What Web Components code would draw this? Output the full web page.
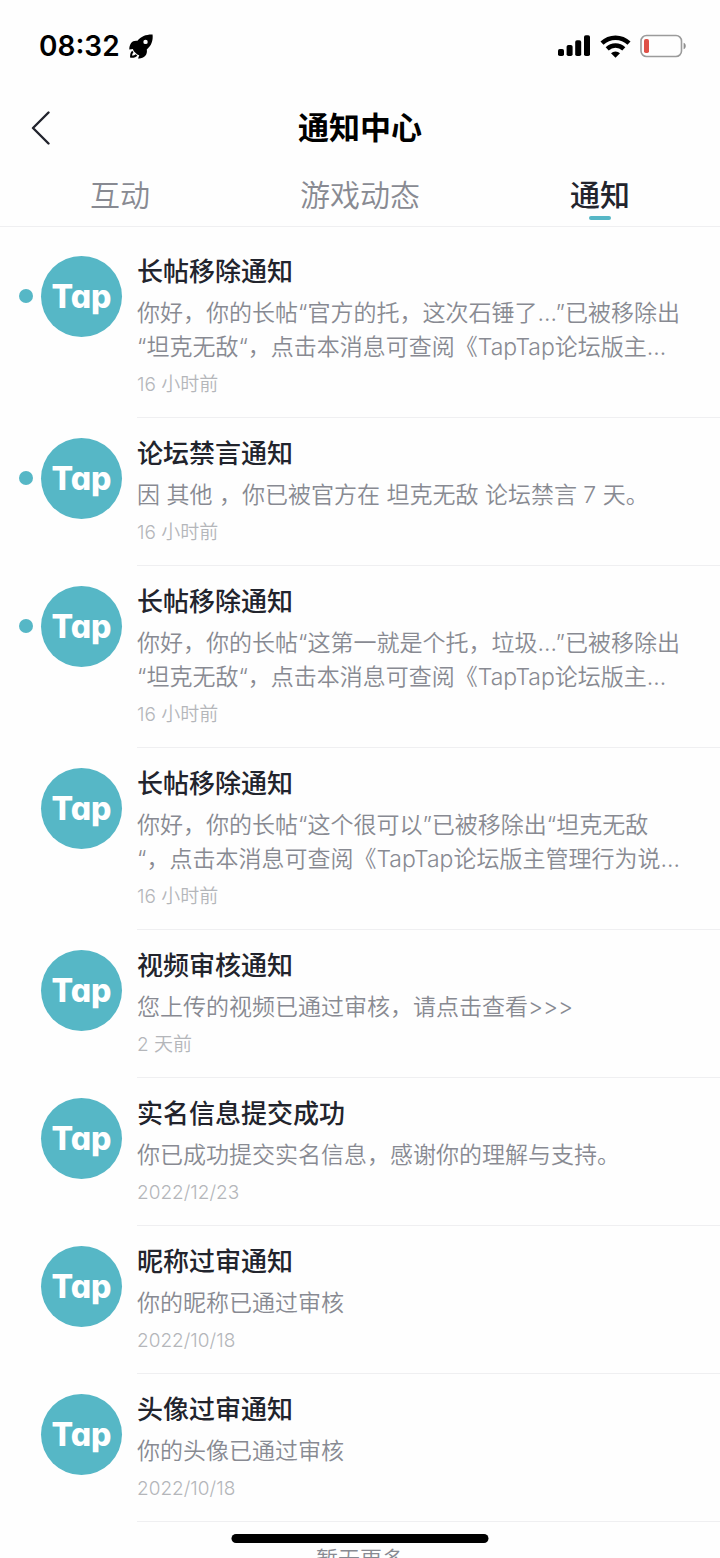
<!DOCTYPE html>
<html lang="zh-CN">
<head>
<meta charset="utf-8">
<meta name="viewport" content="width=device-width, initial-scale=1">
<title>通知中心</title>
<style>
  body {
    margin: 0;
    background: #fefefe;
    color: #22242d;
    font-family: Inter, "Noto Sans CJK SC", sans-serif;
    --accent: #56b7c6;
    --muted: #888a92;
    --faint: #b4b6ba;
    --line: #efeff1;
  }
</style>
</head>
<body>
<notification-page></notification-page>

<script>
class StatusBar extends HTMLElement {
  constructor() {
    super();
    this.attachShadow({ mode: "open" });
  }

  connectedCallback() {
    this.shadowRoot.innerHTML = `
      <style>
        :host {
          display: flex;
          align-items: center;
          justify-content: space-between;
          height: 92px;
          padding: 0 33px 0 39px;
          color: #000;
        }

        .group {
          display: flex;
          align-items: center;
          gap: 9px;
        }

        .time {
          font-size: 28px;
          font-weight: 600;
          line-height: 32px;
        }

        svg {
          display: block;
        }
      </style>
      <div class="group">
        <span class="time">${this.getAttribute("time") || ""}</span>
        <svg width="25" height="25" viewBox="0 0 26 26" aria-hidden="true">
          <path fill-rule="evenodd" d="M24.500.5C18 .3 12.500 2.400 8.800 7 6 6.600 3.600 7.400 2.200 9.400.9 11.200.2 13.600.3 16l3.700-.3 1 2.300 3.600 3.400 2.100.6-1.300 3.500c2.900.3 5.600-.6 7.300-2.500 1.700-1.900 2.300-4.400 1.800-6.900C23 12.500 25.300 7 24.500.5zM17.200 5.900a2.300 2.300 0 1 1 0 4.600 2.300 2.300 0 0 1 0-4.600z"/>
          <path d="M4 18.200c-1.600 1.200-1.900 3.200-1.900 5.400 2.300.1 4.600-.2 5.700-1.900" fill="none" stroke="#000" stroke-width="2"/>
        </svg>
      </div>
      <div class="group">
        <svg width="34" height="22" viewBox="0 0 34 22" aria-hidden="true">
          <rect x="1" y="14" width="6" height="7" rx="1.800"/>
          <rect x="9.600" y="10" width="6" height="11" rx="1.800"/>
          <rect x="18.200" y="5.200" width="6" height="15.800" rx="1.800"/>
          <rect x="27" y="0.200" width="6" height="20.800" rx="1.800"/>
        </svg>
        <svg width="31" height="23" viewBox="0 0 31 23" aria-hidden="true">
          <g fill="none" stroke="#000" stroke-width="4.400">
            <path d="M2 8.200a19.500 19.500 0 0 1 27 0"/>
            <path d="M7.200 13.800a12 12 0 0 1 16.600 0"/>
          </g>
          <path d="M11 18.200a6.800 6.800 0 0 1 9 0l-4.500 4.500z"/>
        </svg>
        <svg width="47" height="24" viewBox="0 0 47 24" aria-hidden="true">
          <rect x="1" y="1.500" width="40.500" height="21" rx="5.500" fill="none" stroke="#9b9b9b" stroke-width="1.600"/>
          <rect x="4" y="5" width="5" height="14" rx="1.800" fill="#df5148"/>
          <path d="M43.600 8.800c2.900.8 2.900 5.600 0 6.400z" fill="#8f8f8f"/>
        </svg>
      </div>
    `;
  }
}

customElements.define("status-bar", StatusBar);

class NavBar extends HTMLElement {
  constructor() {
    super();
    this.attachShadow({ mode: "open" });
    this.shadowRoot.innerHTML = `
      <style>
        :host {
          display: grid;
          grid-template-columns: 80px 1fr 80px;
          align-items: center;
          height: 72px;
        }

        button {
          justify-self: start;
          padding: 8px 30px;
          border: 0;
          background: none;
          cursor: pointer;
        }

        svg {
          display: block;
        }

        h1 {
          margin: 0;
          color: #000;
          font-size: 31px;
          font-weight: 600;
          line-height: 40px;
          text-align: center;
        }
      </style>
      <button type="button" aria-label="返回">
        <svg width="20" height="34" viewBox="0 0 20 34" aria-hidden="true">
          <path d="M18.500 1.500L3 17l15.500 15.500" fill="none" stroke="#22242d" stroke-width="2.400" stroke-linecap="round" stroke-linejoin="round"/>
        </svg>
      </button>
      <h1><slot></slot></h1>
    `;
  }
}

customElements.define("nav-bar", NavBar);

class TabBar extends HTMLElement {
  constructor() {
    super();
    this._items = [];
    this._value = "";
    this.attachShadow({ mode: "open" });
  }

  connectedCallback() {
    this._items = (this.getAttribute("items") || "").split(",");
    this._value = this.getAttribute("value") || "";
    this.render();
  }

  selectValue(nextValue) {
    this._value = nextValue;
    this.dispatchEvent(new CustomEvent("change", { bubbles: true, composed: true }));
    this.render();
  }

  render() {
    const html = this._items
      .map((name) => `<button type="button" role="tab" aria-selected="${name === this._value}">${name}</button>`)
      .join("");

    this.shadowRoot.innerHTML = `
      <style>
        :host {
          display: block;
          border-bottom: 1px solid var(--line);
        }

        .tabs {
          display: grid;
          grid-auto-flow: column;
          grid-auto-columns: 1fr;
        }

        button {
          position: relative;
          height: 62px;
          padding: 0;
          border: 0;
          background: none;
          color: var(--muted);
          font: inherit;
          font-size: 30px;
          font-weight: 350;
          line-height: 40px;
          cursor: pointer;
        }

        button[aria-selected="true"] {
          color: #22242d;
          font-weight: 500;
        }

        button[aria-selected="true"]::after {
          content: "";
          position: absolute;
          left: 50%;
          bottom: 6px;
          width: 22px;
          height: 4px;
          margin-left: -11px;
          border-radius: 2px;
          background: var(--accent);
        }
      </style>
      <div class="tabs" role="tablist">${html}</div>
    `;

    this.shadowRoot.querySelectorAll("button").forEach((btn) => {
      btn.addEventListener("click", () => this.selectValue(btn.textContent));
    });
  }
}

customElements.define("tab-bar", TabBar);

class TapAvatar extends HTMLElement {
  constructor() {
    super();
    this.attachShadow({ mode: "open" });
    this.shadowRoot.innerHTML = `
      <style>
        :host {
          display: flex;
          align-items: center;
          justify-content: center;
          width: 81px;
          height: 81px;
          border-radius: 50%;
          background: var(--accent);
          color: #fff;
          font-size: 32px;
          font-weight: 800;
          line-height: 38px;
          /* single-storey a */
          font-feature-settings: "cv11";
        }
      </style>
      <span>Tap</span>
    `;
  }
}

customElements.define("tap-avatar", TapAvatar);

class NotificationItem extends HTMLElement {
  constructor() {
    super();
    this.attachShadow({ mode: "open" });
    this.shadowRoot.innerHTML = `
      <style>
        :host {
          display: block;
        }

        a {
          display: grid;
          grid-template-columns: 22px 81px 1fr;
          padding-left: 19px;
          color: inherit;
          text-decoration: none;
        }

        .dot {
          width: 14px;
          height: 14px;
          margin-top: 53px;
          border-radius: 50%;
        }

        :host([unread]) .dot {
          background: var(--accent);
        }

        tap-avatar {
          margin-top: 20px;
        }

        .content {
          display: flex;
          flex-direction: column;
          gap: 8px;
          min-width: 0;
          margin-left: 15px;
          padding: 20px 0 19px;
          border-bottom: 1px solid var(--line);
        }

        h2 {
          margin: 0;
          font-size: 26px;
          font-weight: 500;
          line-height: 32px;
        }

        .message {
          color: var(--muted);
          font-size: 23px;
          font-weight: 350;
          line-height: 34px;
          white-space: pre-line;
        }

        time {
          color: var(--faint);
          font-size: 19px;
          font-weight: 350;
          line-height: 26px;
        }
      </style>
      <a href="#">
        <span class="dot"></span>
        <tap-avatar></tap-avatar>
        <div class="content">
          <h2><slot name="title"></slot></h2>
          <div class="message"><slot name="message"></slot></div>
          <time><slot name="time"></slot></time>
        </div>
      </a>
    `;
  }
}

customElements.define("notification-item", NotificationItem);

const notifications = [
  { title: "长帖移除通知", message: "你好，你的长帖“官方的托，这次石锤了…”已被移除出\n“坦克无敌“，点击本消息可查阅《TapTap论坛版主…", time: "16 小时前", unread: true },
  { title: "论坛禁言通知", message: "因 其他 ，你已被官方在 坦克无敌 论坛禁言 7 天。", time: "16 小时前", unread: true },
  { title: "长帖移除通知", message: "你好，你的长帖“这第一就是个托，垃圾…”已被移除出\n“坦克无敌“，点击本消息可查阅《TapTap论坛版主…", time: "16 小时前", unread: true },
  { title: "长帖移除通知", message: "你好，你的长帖“这个很可以”已被移除出“坦克无敌\n“，点击本消息可查阅《TapTap论坛版主管理行为说…", time: "16 小时前" },
  { title: "视频审核通知", message: "您上传的视频已通过审核，请点击查看>>>", time: "2 天前" },
  { title: "实名信息提交成功", message: "你已成功提交实名信息，感谢你的理解与支持。", time: "2022/12/23" },
  { title: "昵称过审通知", message: "你的昵称已通过审核", time: "2022/10/18" },
  { title: "头像过审通知", message: "你的头像已通过审核", time: "2022/10/18" },
];

class NotificationPage extends HTMLElement {
  constructor() {
    super();
    this.attachShadow({ mode: "open" });
  }

  connectedCallback() {
    this.render();
  }

  render() {
    const html = notifications
      .map((item) => `
        <notification-item ${item.unread ? "unread" : ""}>
          <span slot="title">${item.title}</span>
          <span slot="message">${this.escapeHtml(item.message)}</span>
          <span slot="time">${item.time}</span>
        </notification-item>
      `)
      .join("");

    this.shadowRoot.innerHTML = `
      <style>
        :host {
          display: flex;
          flex-direction: column;
          height: 100vh;
          overflow: hidden;
        }

        main {
          flex: 1;
          min-height: 0;
          padding-top: 9px;
          overflow: hidden;
        }

        footer {
          padding-top: 20px;
          color: var(--muted);
          font-size: 22px;
          font-weight: 350;
          line-height: 34px;
          text-align: center;
        }

        .home {
          position: fixed;
          left: 50%;
          bottom: 15px;
          width: 257px;
          height: 9px;
          border-radius: 5px;
          background: #000;
          transform: translateX(-50%);
        }
      </style>
      <status-bar time="08:32"></status-bar>
      <nav-bar>通知中心</nav-bar>
      <tab-bar items="互动,游戏动态,通知" value="通知"></tab-bar>
      <main>
        ${html}
        <footer>暂无更多</footer>
      </main>
      <div class="home"></div>
    `;
  }

  escapeHtml(value) {
    return String(value).replaceAll("&", "&amp;").replaceAll("<", "&lt;").replaceAll(">", "&gt;");
  }
}

customElements.define("notification-page", NotificationPage);
</script>
</body>
</html>
